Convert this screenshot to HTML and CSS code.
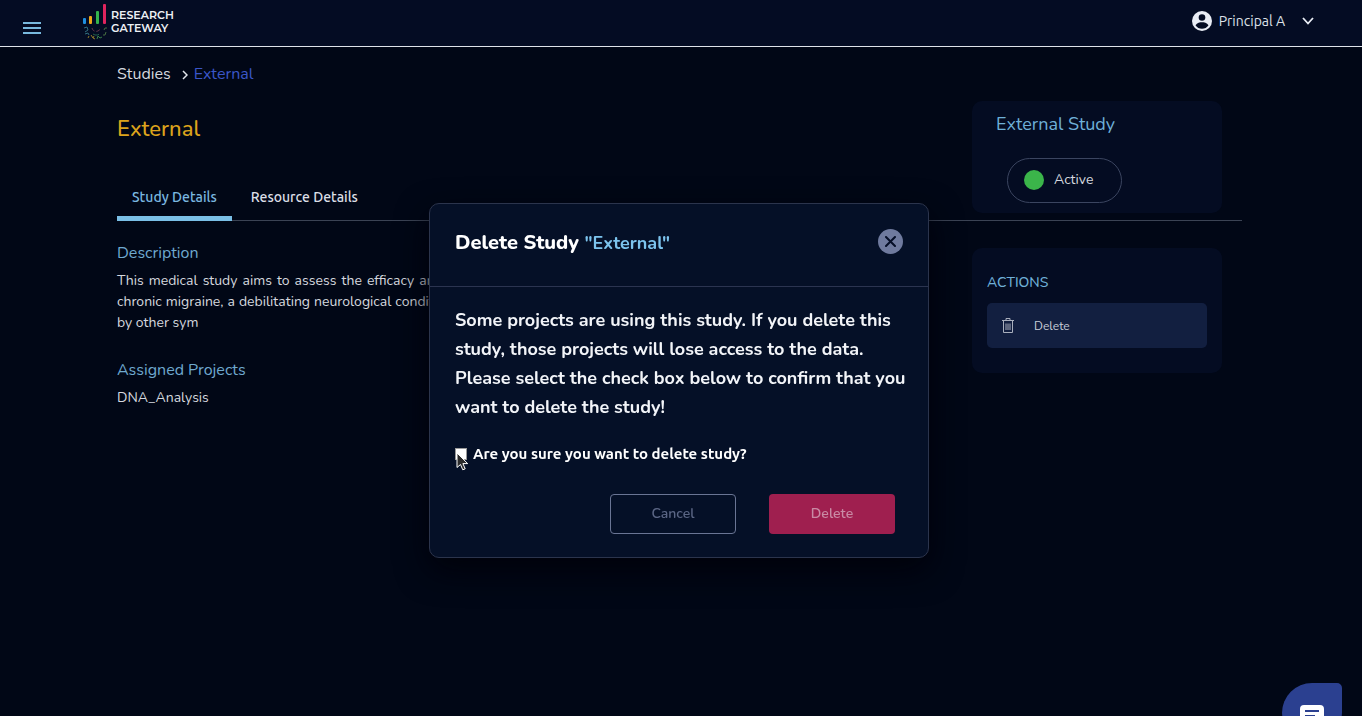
FILE: index.html
```
<!DOCTYPE html>
<html lang="en">
<head>
	<meta charset="UTF-8">
	<meta name="viewport" content="width=device-width, initial-scale=1">
	<title>Research Gateway</title>
	<link rel="stylesheet" href="styles.css">
</head>
<body>
	<header class="topbar">
		<button class="menu-btn" type="button" aria-label="Menu">
			<span></span><span></span><span></span>
		</button>
		<a class="logo" href="#">
			<svg class="logo-mark" width="26" height="38" viewBox="0 0 26 38" aria-hidden="true">
				<rect x="0" y="14" width="3" height="6" rx="1" fill="#1f8fe0"/>
				<rect x="6" y="12" width="3" height="8" rx="1" fill="#f0a818"/>
				<rect x="13" y="7" width="3" height="13" rx="1" fill="#35b44d"/>
				<rect x="20" y="0" width="3" height="20" rx="1" fill="#e0245e"/>
				<g fill="none" stroke-width="1" opacity=".75">
					<path d="M1 24l3-1M4 23l1 3-3 2M2 30l3-1 1 2" stroke="#3f8f9c"/>
					<path d="M6 32l-1 2M8 31l2 3 1-2M10 34l2 1" stroke="#c3a32c"/>
					<path d="M14 35l1-3 2 2 2-1" stroke="#4aa658"/>
					<path d="M20 31l2 0 1-3M21 26l1-2 2 0" stroke="#5d8f4c"/>
					<path d="M9 24c1 4 6 5 9 0" stroke="#8d4a5c" stroke-dasharray="4 2"/>
					<path d="M10 30l2 1 3 0 1-1" stroke="#2f7f58"/>
				</g>
			</svg>
			<span class="logo-text">RESEARCH<br>GATEWAY</span>
		</a>
		<button class="user" type="button">
			<svg width="20" height="20" viewBox="0 0 20 20" aria-hidden="true">
				<circle cx="10" cy="10" r="10" fill="#e9edf5"/>
				<circle cx="10" cy="6.500" r="3.300" fill="#040c23"/>
				<path d="M3.500 14.200C5 11.800 8 11.300 10 11.300s5 .5 6.500 2.900C15 16.600 12.600 17.800 10 17.800s-5-1.200-6.500-3.600z" fill="#040c23"/>
			</svg>
			<span class="user-name">Principal A</span>
			<svg width="12" height="8" viewBox="0 0 12 8" aria-hidden="true">
				<path d="M1 1l5 5.500L11 1" fill="none" stroke="#e9edf5" stroke-width="1.800"/>
			</svg>
		</button>
	</header>

	<main class="page">
		<nav class="crumbs">
			<a href="#">Studies</a>
			<svg width="6" height="10" viewBox="0 0 6 10" aria-hidden="true">
				<path d="M1 1l4 4-4 4" fill="none" stroke="#e3e6ec" stroke-width="1.500"/>
			</svg>
			<span class="current">External</span>
		</nav>

		<section class="hero">
			<div class="hero-left">
				<h1>External</h1>
				<div class="tabs" role="tablist">
					<button class="tab active" type="button" role="tab">Study Details</button>
					<button class="tab" type="button" role="tab">Resource Details</button>
				</div>
			</div>
			<div class="card status-card">
				<h2>External Study</h2>
				<div class="status"><span class="dot"></span>Active</div>
			</div>
		</section>

		<section class="content">
			<div class="details">
				<h3>Description</h3>
				<p class="desc">This medical study aims to assess the efficacy and safety of a new combined drug regimen in the treatment of people with chronic migraine, a debilitating neurological condition characterized by recurrent severe headaches that are often accompanied by other sym</p>
				<h3>Assigned Projects</h3>
				<p>DNA_Analysis</p>
			</div>
			<aside class="card actions">
				<h4>ACTIONS</h4>
				<button class="action" type="button">
					<svg width="12" height="15" viewBox="0 0 12 15" fill="none" stroke="#a9afbd" aria-hidden="true">
						<path d="M0 2.500h12M4 2V.5h4V2M1.500 3v11.500h9V3"/>
						<path d="M4 5.500v6.500M6 5.500v6.500M8 5.500v6.500"/>
					</svg>
					Delete
				</button>
			</aside>
		</section>
	</main>

	<button class="chat" type="button" aria-label="Chat">
		<svg width="24" height="24" viewBox="0 0 24 24" aria-hidden="true">
			<path d="M4 0h16a4 4 0 0 1 4 4v19l-5-4H4a4 4 0 0 1-4-4V4a4 4 0 0 1 4-4z" fill="#fff"/>
			<path d="M5 6h14M5 11h10" stroke="#2b4090" stroke-width="2"/>
		</svg>
	</button>

	<div class="overlay">
		<form class="modal" role="dialog" aria-labelledby="modalTitle">
			<div class="modal-head">
				<h2 id="modalTitle">Delete Study <span>"External"</span></h2>
				<button class="close" type="button" aria-label="Close">
					<svg width="11" height="11" viewBox="0 0 11 11" aria-hidden="true">
						<path d="M1 1l9 9M10 1l-9 9" stroke="#050e27" stroke-width="2" stroke-linecap="round"/>
					</svg>
				</button>
			</div>
			<div class="modal-body">
				<p>Some projects are using this study. If you delete this study, those projects will lose access to the data. Please select the check box below to confirm that you want to delete the study!</p>
				<div class="confirm">
					<input type="checkbox" id="sure">
					<label for="sure">Are you sure you want to delete study?</label>
					<svg class="cursor" width="13" height="19" viewBox="0 0 13 19" aria-hidden="true">
						<path d="M1 1v14.500l3.500-3 2.300 5.300 2.400-1-2.300-5.200h4.800z" fill="#2b2b2b" stroke="#fff"/>
					</svg>
				</div>
				<div class="buttons">
					<button class="btn cancel" type="button">Cancel</button>
					<button class="btn delete" type="submit">Delete</button>
				</div>
			</div>
		</form>
	</div>
</body>
</html>
```
FILE: styles.css
```
*{
	margin: 0;
	padding: 0;
	box-sizing: border-box;
}
body{
	min-height: 100vh;
	background: #010716;
	color: #d5d8df;
	font-family: Nunito, "Open Sans", sans-serif;
	font-size: 14px;
	line-height: 21px;
	overflow: hidden;
}
button{
	font-family: inherit;
	border: none;
	background: none;
	cursor: pointer;
}
a{
	color: inherit;
	text-decoration: none;
}
h1, h2, h3, h4{
	font-weight: 400;
}
svg{
	display: block;
	flex: none;
}

/* top bar */
.topbar{
	display: flex;
	align-items: flex-start;
	height: 47px;
	padding: 0 48px 0 23px;
	background: #040c23;
	border-bottom: 1px solid #dfe3ea;
}
.menu-btn{
	display: flex;
	flex-direction: column;
	gap: 3px;
	width: 18px;
	margin-top: 22px;
}
.menu-btn span{
	height: 2px;
	background: #78b9de;
}
.logo{
	display: flex;
	gap: 2px;
	margin: 4px auto 0 42px;
}
.logo-text{
	padding-top: 5px;
	color: #eef1f6;
	font-family: Montserrat, Lato, sans-serif;
	font-size: 11px;
	font-weight: 600;
	line-height: 13px;
}
.user{
	display: flex;
	align-items: center;
	gap: 7px;
	margin-top: 8px;
	color: #dfe2e9;
	font-family: Ubuntu, "Noto Sans", sans-serif;
	font-size: 14px;
	line-height: 24px;
}
.user-name{
	padding: 1px 10px 0 0;
}

/* page */
.page{
	padding: 17px 120px 0 117px;
}
.crumbs{
	display: flex;
	align-items: center;
	gap: 6px;
	font-size: 16px;
}
.crumbs svg{
	margin-left: 5px;
}
.crumbs .current{
	color: #3b56c8;
}
.hero{
	display: flex;
	justify-content: space-between;
	margin-top: 16px;
	padding-right: 20px;
	border-bottom: 1px solid #3b4354;
}
.hero-left{
	display: flex;
	flex-direction: column;
	justify-content: space-between;
	margin-bottom: -1px;
}
h1{
	padding-top: 13px;
	color: #dda41c;
	font-size: 22px;
	font-weight: 500;
	line-height: 30px;
}
.tabs{
	display: flex;
}
.tab{
	padding: 0 15px 4px;
	border-bottom: 5px solid transparent;
	color: #dcdfe6;
	font-family: Ubuntu, "Noto Sans", sans-serif;
	font-size: 14px;
	font-weight: 500;
	line-height: 30px;
}
.tab.active{
	margin-right: 4px;
	border-color: #7abfe6;
	color: #7ab8e0;
}
.card{
	flex: none;
	width: 250px;
	border-radius: 10px;
	background: #040c22;
}
.status-card{
	margin-bottom: 7px;
	padding: 10px 24px;
}
.status-card h2{
	color: #6fb0d8;
	font-size: 18px;
	line-height: 26px;
}
.status{
	display: flex;
	align-items: center;
	gap: 10px;
	width: 115px;
	height: 45px;
	margin: 21px 0 0 11px;
	padding: 0 0 2px 16px;
	border: 1px solid #3b4560;
	border-radius: 23px;
}
.dot{
	width: 20px;
	height: 20px;
	border-radius: 50%;
	background: #3bb54a;
}
.content{
	display: flex;
	align-items: flex-start;
	justify-content: space-between;
	gap: 60px;
	padding: 21px 20px 0 0;
}
h3{
	color: #6fa9cf;
	font-size: 16px;
	line-height: 22px;
}
.details p{
	padding-top: 6px;
	font-size: 14px;
}
.details .desc{
	padding-bottom: 26px;
	text-align: justify;
}
.actions{
	margin-top: 6px;
	padding: 24px 15px 25px;
}
.actions h4{
	color: #6fb0d8;
	font-size: 14px;
	font-weight: 500;
	line-height: 22px;
}
.action{
	display: flex;
	align-items: center;
	gap: 20px;
	width: 100%;
	height: 45px;
	margin-top: 9px;
	padding-left: 15px;
	border-radius: 5px;
	background: #121f40;
	color: #c9cdd8;
	font-size: 12px;
}

/* chat bubble, half hidden at the bottom of the window */
.chat{
	position: fixed;
	right: 20px;
	bottom: -27px;
	display: flex;
	justify-content: center;
	width: 60px;
	height: 60px;
	padding-top: 22px;
	border-radius: 30px 5px 30px 30px;
	background: #2b4090;
}

/* modal */
.overlay{
	position: fixed;
	inset: 0;
	display: flex;
	align-items: center;
	justify-content: center;
	padding: 45px 4px 0 0;
}
.modal{
	width: 500px;
	border: 1px solid #2b344c;
	border-radius: 10px;
	background: #051027;
	box-shadow: 0 12px 32px #00020a;
}
.modal-head{
	display: flex;
	align-items: flex-start;
	justify-content: space-between;
	height: 83px;
	padding: 25px 25px 0;
	border-bottom: 1px solid #2b3450;
}
.modal-head h2{
	color: #fff;
	font-size: 20px;
	font-weight: 800;
	line-height: 28px;
}
.modal-head h2 span{
	color: #7cc4ee;
	font-size: 18px;
	font-weight: 700;
}
.close{
	display: flex;
	align-items: center;
	justify-content: center;
	width: 25px;
	height: 25px;
	border-radius: 50%;
	background: #6f7a9e;
}
.modal-body{
	padding: 19px 20px 23px 25px;
}
.modal-body p{
	color: #f2f4f8;
	font-size: 18px;
	font-weight: 700;
	line-height: 29px;
}
.confirm{
	position: relative;
	display: flex;
	align-items: center;
	gap: 6px;
	margin-top: 20px;
	color: #fff;
	font-family: Ubuntu, "Noto Sans", sans-serif;
	font-size: 15px;
	font-weight: 700;
	line-height: 24px;
}
.confirm input{
	appearance: none;
	width: 12px;
	height: 12px;
	border: 1px solid #9a9a9a;
	background: #fff;
}
.cursor{
	position: absolute;
	left: 1px;
	top: 10px;
}
.buttons{
	display: flex;
	justify-content: flex-end;
	gap: 33px;
	margin-top: 28px;
	padding-right: 13px;
}
.btn{
	width: 126px;
	height: 40px;
	padding-bottom: 2px;
	border-radius: 4px;
	font-size: 14px;
	font-weight: 600;
}
.cancel{
	border: 1px solid #6a7594;
	color: #5b6685;
}
.delete{
	background: #9f1f4f;
	color: #c98aa4;
}
```
